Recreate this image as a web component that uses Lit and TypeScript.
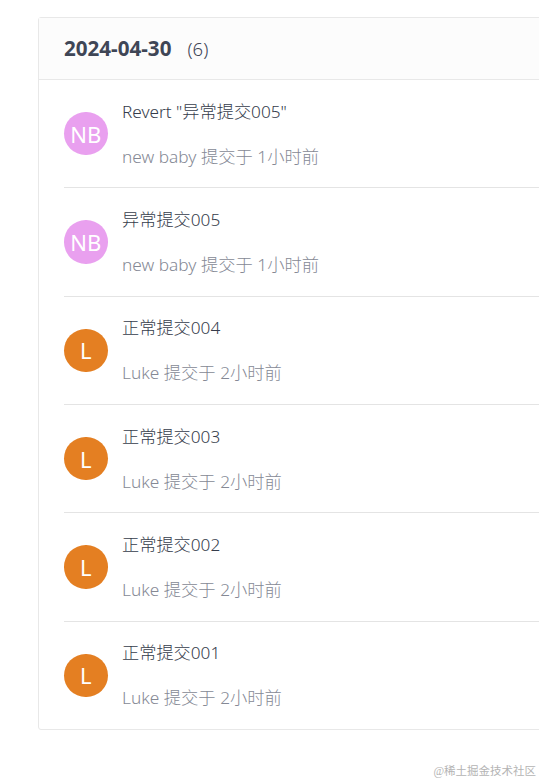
import { LitElement, html, css } from "lit";
import { customElement } from "lit/decorators.js";

const rows = [
  { title: 'Revert "异常提交005"', who: "new baby", when: "1小时前", av: "NB", color: "#e9a0ef" },
  { title: "异常提交005", who: "new baby", when: "1小时前", av: "NB", color: "#e9a0ef" },
  { title: "正常提交004", who: "Luke", when: "2小时前", av: "L", color: "#e47f22" },
  { title: "正常提交003", who: "Luke", when: "2小时前", av: "L", color: "#e47f22" },
  { title: "正常提交002", who: "Luke", when: "2小时前", av: "L", color: "#e47f22" },
  { title: "正常提交001", who: "Luke", when: "2小时前", av: "L", color: "#e47f22" },
];

@customElement("app-root")
export class AppRoot extends LitElement {
  static styles = css`
    :host {
      display: block;
      width: 539px;
      height: 782px;
      overflow: hidden;
      background: #fff;
      position: relative;
      font-family: "Noto Sans", "Noto Sans CJK SC", sans-serif;
    }
    .page {
      padding: 17px 0 0 38px;
    }
    .card {
      width: 540px;
      height: 713px;
      box-sizing: border-box;
      border: 1px solid #e8e8e8;
      border-radius: 3px;
      display: flex;
      flex-direction: column;
    }
    .head {
      height: 62px;
      box-sizing: border-box;
      background: #fcfcfc;
      border-bottom: 1px solid #e8e8e8;
      display: flex;
      align-items: center;
      padding: 0 0 1px 25px;
      gap: 16px;
      color: #3f4656;
      flex: none;
    }
    .date {
      font-size: 20.6px;
      font-weight: 700;
    }
    .count {
      font-size: 18.5px;
      font-weight: 300;
      color: #3f4656;
    }
    .list {
      padding-left: 25px;
      flex: 1;
      display: flex;
      flex-direction: column;
    }
    .row {
      flex: 1;
      display: flex;
      gap: 14.5px;
      align-items: center;
      border-bottom: 1px solid #e4e4e4;
    }
    .row:last-child {
      border-bottom: none;
    }
    .avatar {
      width: 43.5px;
      height: 43.5px;
      border-radius: 50%;
      color: #fff;
      font-size: 22px;
      display: flex;
      align-items: center;
      justify-content: center;
      flex: none;
    }
    .text {
      display: flex;
      flex-direction: column;
      gap: 23px;
      margin-top: 1px;
    }
    .title {
      font-size: 17.2px;
      line-height: 22px;
      font-weight: 300;
      color: #353c4b;
    }
    .sub {
      font-size: 17.3px;
      line-height: 22px;
      font-weight: 300;
      color: #858995;
    }
    .mark {
      position: absolute;
      right: 3px;
      bottom: 4px;
      font-family: "Liberation Serif", "Noto Sans CJK SC", serif;
      font-size: 11.5px;
      line-height: 14px;
      color: #b4b4b4;
    }
  `;

  render() {
    return html`
      <div class="page">
        <div class="card">
          <div class="head">
            <span class="date">2024-04-30</span>
            <span class="count">(6)</span>
          </div>
          <div class="list">
            ${rows.map(
              (r) => html`
                <div class="row">
                  <div class="avatar" style="background:${r.color}">${r.av}</div>
                  <div class="text">
                    <div class="title">${r.title}</div>
                    <div class="sub">${r.who} 提交于 ${r.when}</div>
                  </div>
                </div>
              `
            )}
          </div>
        </div>
      </div>
      <div class="mark">@稀土掘金技术社区</div>
    `;
  }
}
